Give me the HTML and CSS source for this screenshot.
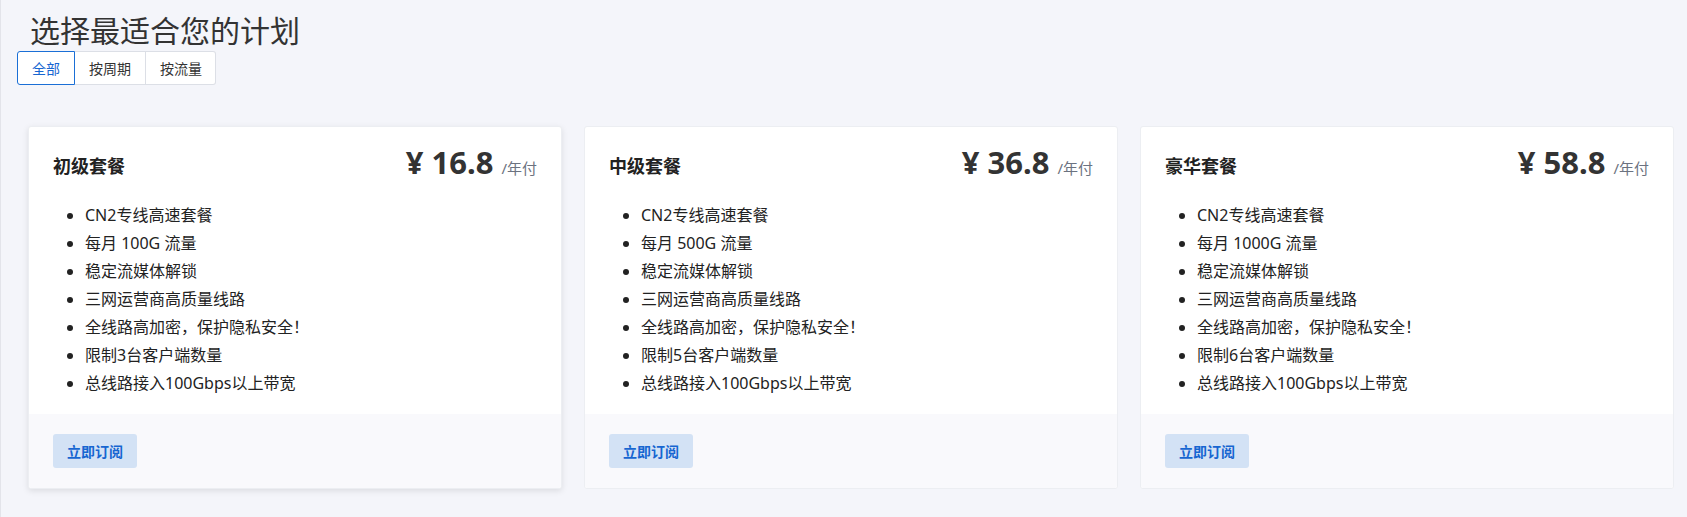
FILE: index.html
```html
<!DOCTYPE html>
<html lang="zh-CN">
<head>
    <meta charset="UTF-8">
    <meta name="viewport" content="width=device-width, initial-scale=1.0">
    <title>选择最适合您的计划</title>
    <link rel="stylesheet" href="styles.css">
</head>
<body>

    <div class="page">
        <h1 class="page-title">选择最适合您的计划</h1>

        <div class="tabs">
            <button class="tab active">全部</button>
            <button class="tab">按周期</button>
            <button class="tab">按流量</button>
        </div>

        <div class="plans">
            <div class="plan raised">
                <div class="plan-body">
                    <div class="plan-head">
                        <div class="plan-name">初级套餐</div>
                        <div class="plan-price">¥ 16.8<span class="plan-unit">/年付</span></div>
                    </div>
                    <ul class="plan-features">
                        <li>CN2专线高速套餐</li>
                        <li>每月 100G 流量</li>
                        <li>稳定流媒体解锁</li>
                        <li>三网运营商高质量线路</li>
                        <li>全线路高加密，保护隐私安全！</li>
                        <li>限制3台客户端数量</li>
                        <li>总线路接入100Gbps以上带宽</li>
                    </ul>
                </div>
                <div class="plan-foot">
                    <button class="subscribe">立即订阅</button>
                </div>
            </div>

            <div class="plan">
                <div class="plan-body">
                    <div class="plan-head">
                        <div class="plan-name">中级套餐</div>
                        <div class="plan-price">¥ 36.8<span class="plan-unit">/年付</span></div>
                    </div>
                    <ul class="plan-features">
                        <li>CN2专线高速套餐</li>
                        <li>每月 500G 流量</li>
                        <li>稳定流媒体解锁</li>
                        <li>三网运营商高质量线路</li>
                        <li>全线路高加密，保护隐私安全！</li>
                        <li>限制5台客户端数量</li>
                        <li>总线路接入100Gbps以上带宽</li>
                    </ul>
                </div>
                <div class="plan-foot">
                    <button class="subscribe">立即订阅</button>
                </div>
            </div>

            <div class="plan">
                <div class="plan-body">
                    <div class="plan-head">
                        <div class="plan-name">豪华套餐</div>
                        <div class="plan-price">¥ 58.8<span class="plan-unit">/年付</span></div>
                    </div>
                    <ul class="plan-features">
                        <li>CN2专线高速套餐</li>
                        <li>每月 1000G 流量</li>
                        <li>稳定流媒体解锁</li>
                        <li>三网运营商高质量线路</li>
                        <li>全线路高加密，保护隐私安全！</li>
                        <li>限制6台客户端数量</li>
                        <li>总线路接入100Gbps以上带宽</li>
                    </ul>
                </div>
                <div class="plan-foot">
                    <button class="subscribe">立即订阅</button>
                </div>
            </div>
        </div>
    </div>

</body>
</html>
```

FILE: styles.css
```css
body {
    margin: 0;
    font-family: "Noto Sans", "Noto Sans CJK SC", sans-serif;
    background-color: #f4f5fa;
    color: #222;
}

.page {
    min-height: 100vh;
    box-sizing: border-box;
    border-left: 1px solid #e3e4ea;
    padding: 11px 13px 0 16px;
}

.page-title {
    margin: 0;
    padding-left: 13px;
    font-size: 30px;
    font-weight: normal;
    line-height: 40px;
    color: #333;
}

.tabs {
    display: flex;
}

.tab {
    height: 34px;
    padding: 0 14px;
    font-family: inherit;
    font-size: 14px;
    color: #333;
    background: #fff;
    border: 1px solid #dcdfe6;
    border-left: none;
    cursor: pointer;
}

.tab:first-child {
    border-left: 1px solid #dcdfe6;
    border-radius: 3px 0 0 3px;
}

.tab:last-child {
    padding-right: 13px;
    border-radius: 0 3px 3px 0;
}

.tab.active {
    color: #1766d1;
    border: 1px solid #1a6fd6;
}

.plans {
    display: grid;
    grid-template-columns: repeat(3, 1fr);
    gap: 22px;
    padding: 41px 0 0 11px;
}

.plan {
    background: #fff;
    border: 1px solid #eceef2;
    border-radius: 3px;
    overflow: hidden;
}

.plan.raised {
    box-shadow: 0 2px 6px rgba(0, 0, 0, 0.1);
}

.plan-body {
    padding: 22px 24px 17px;
}

.plan-head {
    display: flex;
    justify-content: space-between;
    align-items: center;
    height: 32px;
}

.plan-name {
    font-size: 18px;
    font-weight: bold;
    color: #222;
}

.plan-price {
    font-size: 31px;
    font-weight: bold;
    line-height: 32px;
    color: #333;
}

.plan-unit {
    margin-left: 8px;
    font-size: 15px;
    font-weight: normal;
    color: #6b7280;
}

.plan-features {
    margin: 20px 0 0;
    padding-left: 32px;
    font-size: 16px;
    line-height: 28px;
}

.plan-foot {
    background: #f9f9fc;
    padding: 20px 24px;
}

.subscribe {
    height: 34px;
    padding: 0 14px;
    font-family: inherit;
    font-size: 14px;
    font-weight: bold;
    color: #1766d1;
    background: #d3e2f5;
    border: none;
    border-radius: 3px;
    cursor: pointer;
}
```
